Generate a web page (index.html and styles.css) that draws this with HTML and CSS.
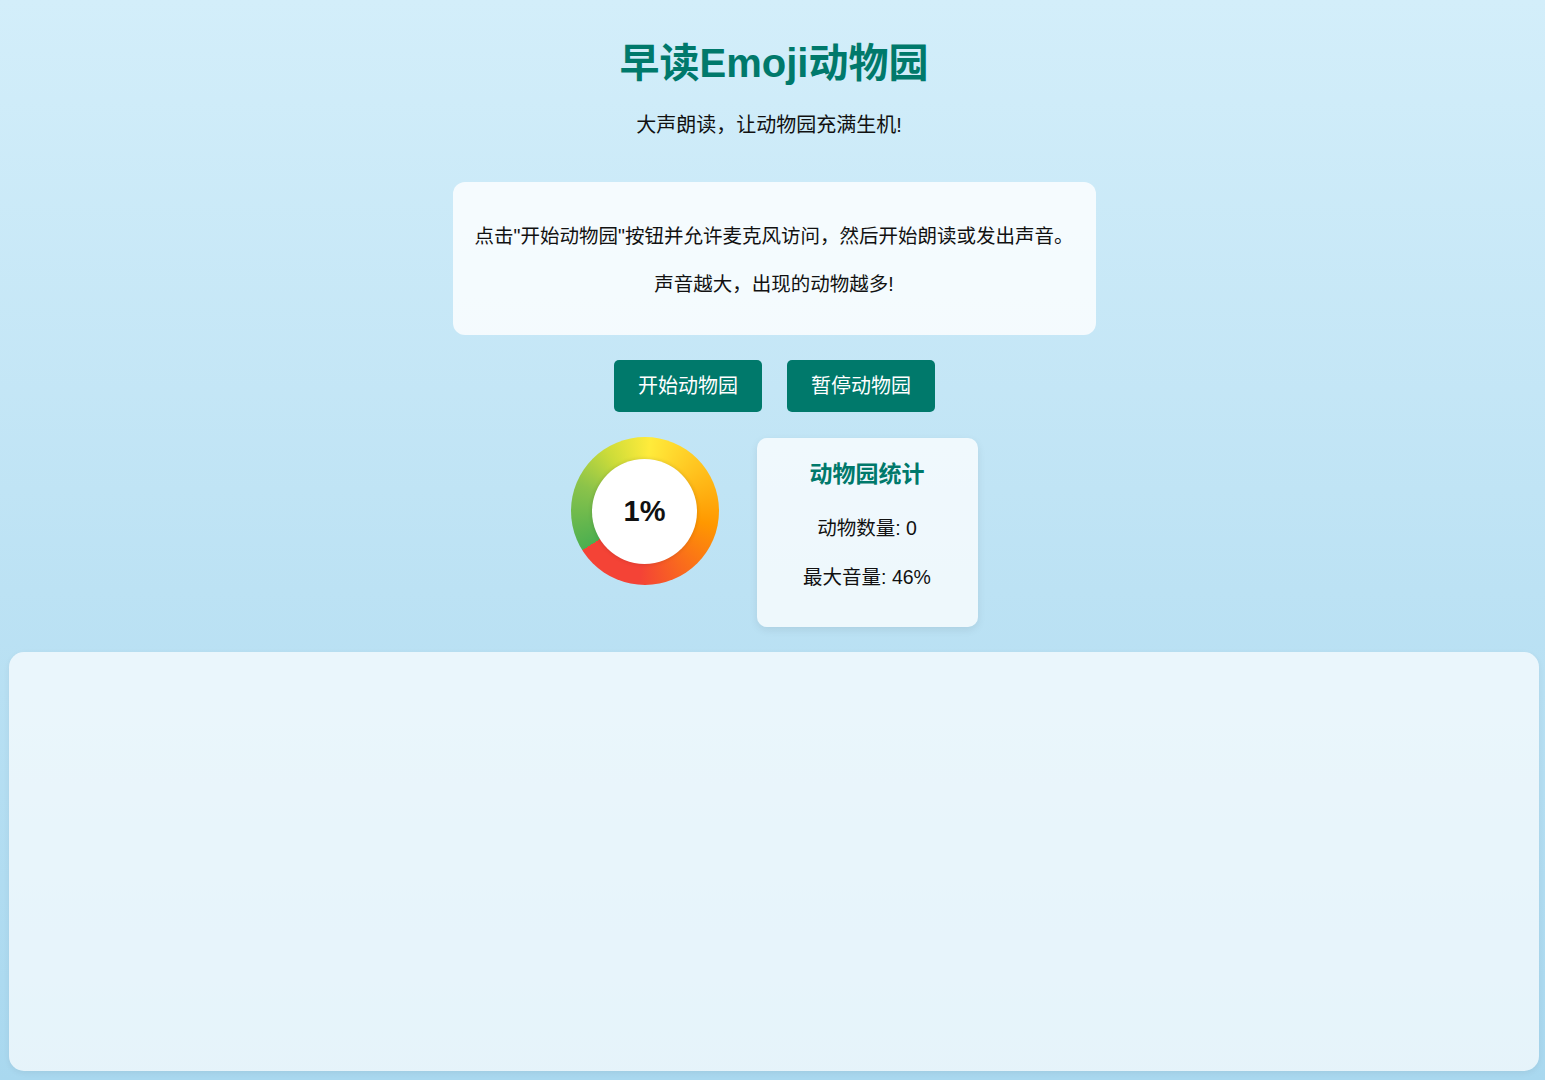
FILE: index.html
```html
<!DOCTYPE html>
<html lang="zh-CN">

<head>
    <meta charset="UTF-8">
    <meta name="viewport" content="width=device-width, initial-scale=1.0">
    <title>早读Emoji动物园</title>
    <link rel="stylesheet" href="styles.css">
</head>

<body>
    <h1 class="title">早读Emoji动物园</h1>
    <p class="subtitle">大声朗读，让动物园充满生机!</p>

    <div class="instructions">
        <p>点击"开始动物园"按钮并允许麦克风访问，然后开始朗读或发出声音。</p>
        <p>声音越大，出现的动物越多!</p>
    </div>

    <div class="controls">
        <button class="button" id="start-btn">开始动物园</button>
        <button class="button" id="stop-btn">暂停动物园</button>
    </div>

    <div class="status-row">
        <div class="meter">
            <div class="meter__inner"><span id="volume">1%</span></div>
        </div>
        <div class="stats">
            <h3>动物园统计</h3>
            <p>动物数量: <span id="animal-count">0</span></p>
            <p>最大音量: <span id="max-volume">46%</span></p>
        </div>
    </div>

    <div class="zoo" id="zoo"></div>
</body>

</html>
```

FILE: styles.css
```css
body {
    font-family: "Liberation Sans", Arial, "Noto Sans CJK SC", sans-serif;
    margin: 0;
    padding: 39px 6px 10px 9px;
    min-height: 100vh;
    box-sizing: border-box;
    background: linear-gradient(to bottom, #d3eefa, #a9d8ef);
    color: #111;
    text-align: center;
}

.title {
    font-size: 40px;
    line-height: 48px;
    margin: 0;
    color: #00796b;
    font-weight: bold;
}

.subtitle {
    font-size: 20px;
    line-height: 26px;
    margin: 25px 0 0;
    padding-right: 10px;
}

.instructions {
    width: 643px;
    box-sizing: border-box;
    margin: 44px auto 0;
    padding: 21px 20px 17px;
    background-color: rgba(255, 255, 255, 0.8);
    border-radius: 12px;
    font-size: 19.5px;
    line-height: 29px;
}

.instructions p {
    margin: 19px 0;
}

.controls {
    display: flex;
    justify-content: center;
    gap: 25px;
    margin-top: 25px;
    padding-left: 1px;
}

.button {
    font-family: inherit;
    font-size: 20px;
    line-height: 22px;
    padding: 15px 0;
    width: 148px;
    color: white;
    background-color: #00796b;
    border: none;
    border-radius: 5px;
    cursor: pointer;
}

.status-row {
    display: flex;
    justify-content: center;
    align-items: flex-start;
    gap: 38px;
    margin-top: 25px;
}

.meter {
    width: 148px;
    height: 148px;
    border-radius: 50%;
    background: conic-gradient(from 238deg, #4caf50, #8bc34a 15%, #cddc39 25%, #ffeb3b 35%, #ff9800 62%, #f44336 85%, #f44336);
    display: flex;
    justify-content: center;
    align-items: center;
}

.meter__inner {
    width: 105px;
    height: 105px;
    border-radius: 50%;
    background-color: white;
    box-shadow: 0 0 4px rgba(0, 0, 0, 0.15);
    display: flex;
    justify-content: center;
    align-items: center;
    font-size: 29px;
    font-weight: bold;
    color: #111;
}

.stats {
    width: 221px;
    box-sizing: border-box;
    margin-top: 1px;
    padding: 20px 20px 13px;
    background-color: rgba(255, 255, 255, 0.75);
    border-radius: 10px;
    box-shadow: 0 3px 8px rgba(0, 0, 0, 0.08);
}

.stats h3 {
    font-size: 23px;
    line-height: 24px;
    margin: 4px 0 30px;
    color: #00796b;
}

.stats p {
    font-size: 19.5px;
    line-height: 25px;
    margin: 24px 0;
}

.zoo {
    height: 419px;
    margin-top: 25px;
    background-color: rgba(255, 255, 255, 0.7);
    border-radius: 15px;
    box-shadow: 0 2px 6px rgba(0, 0, 0, 0.06);
}
```
